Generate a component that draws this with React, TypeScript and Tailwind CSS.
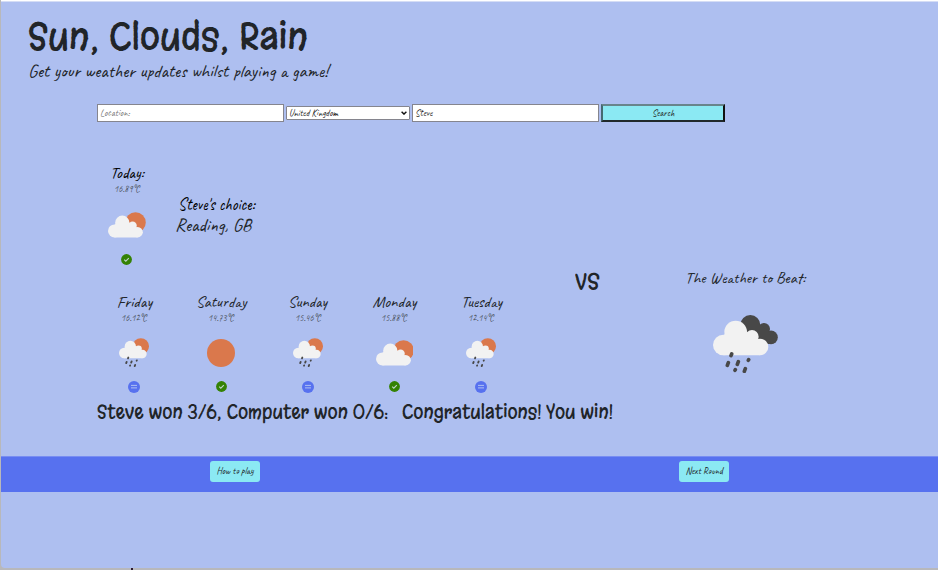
import { useLayoutEffect, useRef, useState } from "react";
import type { ReactNode } from "react";

const HAND = "font-['Caveat','Lato','Open_Sans',sans-serif]";
const TITLE = "font-['Margarine','Delius','Lato',sans-serif]";

/* Single line of lettering condensed or widened to fill its measure. */
function Line({ width, className, children }: { width: number; className: string; children: ReactNode }) {
  const ref = useRef<HTMLSpanElement>(null);
  const [scale, setScale] = useState(1);
  useLayoutEffect(() => {
    if (ref.current) setScale(width / ref.current.offsetWidth);
  }, [width]);
  return (
    <div className={`shrink-0 whitespace-nowrap ${className}`} style={{ width }}>
      <span ref={ref} className="inline-block origin-left whitespace-pre" style={{ transform: `scaleX(${scale})` }}>
        {children}
      </span>
    </div>
  );
}

function Cloud() {
  return (
    <g fill="#f2f2f2">
      <circle cx="31" cy="90" r="31" />
      <circle cx="68" cy="51" r="34" />
      <circle cx="117" cy="65" r="20" />
      <circle cx="141" cy="96" r="25" />
      <path d="M31 121V62L45 45H95L120 65L141 75V121Z" />
    </g>
  );
}

function Rain() {
  return (
    <g stroke="#484848" strokeWidth="11" strokeLinecap="round">
      <path d="M56 117l-2 5M46 143l-3 8M76 140l-3 8M107 134l-1 2M67 164l-1 2M97 161l-3 8" />
    </g>
  );
}

function WeatherIcon({ kind }: { kind: string }) {
  if (kind === "sun")
    return <svg className="size-[28px]" viewBox="0 0 28 28"><circle cx="14" cy="14" r="14" fill="#da784c" /></svg>;
  if (kind === "storm")
    return (
      <svg className="h-[58.3px] w-[65px]" viewBox="0 0 195 175">
        <g fill="#484848">
          <circle cx="112" cy="30" r="30" />
          <circle cx="153" cy="42" r="18" />
          <circle cx="174" cy="67" r="20.5" />
          <path d="M100 30H142L170 50L174 87H100Z" />
        </g>
        <Cloud />
        <Rain />
      </svg>
    );
  const rain = kind === "rain";
  return (
    <svg className={rain ? "h-[29.2px] w-[30px]" : "h-[25.4px] w-[37.8px]"} viewBox={rain ? "0 0 180 175" : "0 0 180 121"}>
      <circle cx="131" cy="50" r="49" fill="#da784c" />
      <Cloud />
      {rain && <Rain />}
    </svg>
  );
}

function Badge({ win }: { win: boolean }) {
  return win ? (
    <svg className="size-[11px]" viewBox="0 0 11 11">
      <circle cx="5.5" cy="5.5" r="5.4" fill="#348204" />
      <path d="M3.2 5.7l1.6 1.5 3-3" fill="none" stroke="#c2d5ce" strokeWidth="1.1" />
    </svg>
  ) : (
    <svg className="size-[12px]" viewBox="0 0 12 12">
      <circle cx="6" cy="6" r="6" fill="#5771ef" />
      <path d="M3 4.4h6M3 6.9h6" stroke="#afc0f1" strokeWidth="1" />
    </svg>
  );
}

const days = [
  { name: "Friday", width: 35, temp: "16.12°C", icon: "rain", win: false },
  { name: "Saturday", width: 50, temp: "14.73°C", icon: "sun", win: true },
  { name: "Sunday", width: 39, temp: "15.46°C", icon: "rain", win: false },
  { name: "Monday", width: 44, temp: "15.88°C", icon: "cloud", win: true },
  { name: "Tuesday", width: 41, temp: "12.14°C", icon: "rain", win: false },
];

export default function App() {
  return (
    <div className="h-[570px] w-[938px] overflow-hidden bg-[#b8b8bb] pl-px text-[#212529]">
      <div className="h-px bg-white" />
      <div className="flex h-[567px] flex-col rounded-bl-[4px] border-t border-[#d5ddf5] bg-[#aebff0]">
        <header className="h-[102px] pt-[12px] pl-[27px]">
          <Line width={280} className={`${TITLE} h-[48px] text-[36px] leading-[47px]`}>Sun, Clouds, Rain</Line>
          <Line width={300} className={`${HAND} h-[20px] text-[17px] leading-[20px]`}>Get your weather updates whilst playing a game!</Line>
        </header>

        <form className={`${HAND} ml-[96px] flex h-[18px] items-center gap-[2px] text-[9px]`}>
          <div className="flex h-[18px] w-[187px] items-center border border-[#85858e] bg-white pl-[2px] text-[#777]">
            <Line width={30} className="leading-[14px]">Location:</Line>
          </div>
          <div className="flex h-[14px] w-[124px] items-center justify-between rounded-[1px] border border-[#85858e] bg-white pr-[2px] pl-[2px] text-[#222]">
            <Line width={49} className="leading-[12px]">United Kingdom</Line>
            <svg className="h-[4px] w-[6px]" viewBox="0 0 6 4"><path d="M.6.7L3 3.1 5.4.7" fill="none" stroke="#111" strokeWidth="1.4" /></svg>
          </div>
          <div className="flex h-[18px] w-[187px] items-center border border-[#85858e] bg-white pl-[2px] text-[#222]">
            <Line width={17} className="leading-[14px]">Steve</Line>
          </div>
          <div className="flex h-[18px] w-[124px] items-center justify-center border-2 border-t-[#68848b] border-r-[#111] border-b-[#20292b] border-l-[#446a70] bg-[#8be9f3] text-[#222]">
            <Line width={22} className="leading-[14px]">Search</Line>
          </div>
        </form>

        <main className="flex h-[334px] pl-[96px]">
          <section className="w-[450px] shrink-0">
            <div className="flex h-[168px] pt-[43px]">
              <div className="flex w-[60px] flex-col items-center">
                <Line width={34} className={`${HAND} mr-px h-[17px] text-[16px] leading-[17px] text-black`}>Today:</Line>
                <Line width={26} className={`${HAND} h-[13px] text-[9px] leading-[14px] text-[#4c535f]`}>16.89°C</Line>
                <div className="mt-[17px] flex h-[26px] items-center"><WeatherIcon kind="cloud" /></div>
                <div className="mt-[16px] mr-[2px]"><Badge win /></div>
              </div>
              <div className="mt-[30px] ml-[18px]">
                <Line width={77} className={`${HAND} ml-[3px] h-[21px] text-[17px] leading-[20px] text-black`}>Steve's choice:</Line>
                <Line width={76} className={`${HAND} h-[22px] text-[18px] leading-[19px]`}>Reading, GB</Line>
              </div>
            </div>
            <div className="flex h-[110px]">
              {days.map((d) => (
                <div key={d.name} className="flex w-[86.7px] shrink-0 flex-col items-center pr-[12px]">
                  <Line width={d.width} className={`${HAND} h-[22px] text-[16.5px] leading-[23px]`}>{d.name}</Line>
                  <Line width={26} className={`${HAND} h-[12px] text-[9px] leading-[12px] text-[#4c535f]`}>{d.temp}</Line>
                  <div className="mt-[14px] flex h-[30px] items-center"><WeatherIcon kind={d.icon} /></div>
                  <div className="mt-[13px]"><Badge win={d.win} /></div>
                </div>
              ))}
            </div>
            <div className={`${TITLE} -mt-[1px] flex h-[26px] gap-[14px] text-[19px] leading-[26px]`}>
              <Line width={291} className="">Steve won 3/6, Computer won 0/6:</Line>
              <Line width={211} className="">Congratulations! You win!</Line>
            </div>
          </section>
          <div className="w-[56px] shrink-0 pt-[146px] pl-[28px]">
            <Line width={25} className={`${TITLE} h-[28px] text-[22px] leading-[28px]`}>VS</Line>
          </div>
          <section className="flex flex-col items-center pt-[144px] pl-[82px]">
            <Line width={120} className={`${HAND} h-[24px] text-[16.5px] leading-[23px]`}>The Weather to Beat:</Line>
            <div className="mt-[25px] ml-px"><WeatherIcon kind="storm" /></div>
          </section>
        </main>

        <footer className={`${HAND} flex h-[36px] shrink-0 justify-between border-t border-[#788df2] bg-[#5771ef] pt-[4px] pr-[209px] pl-[209px] text-[9.5px]`}>
          <div className="flex h-[21px] w-[50px] items-center justify-center rounded-[3px] bg-[#8be9f3] pb-px">
            <Line width={37} className="leading-[16px]">How to play</Line>
          </div>
          <div className="flex h-[21px] w-[50px] items-center justify-center rounded-[3px] bg-[#8be9f3] pb-px">
            <Line width={37} className="leading-[16px]">Next Round</Line>
          </div>
        </footer>
      </div>
      <div className="ml-[130px] h-[2px] w-[2px] bg-[#2b1931]" />
    </div>
  );
}
